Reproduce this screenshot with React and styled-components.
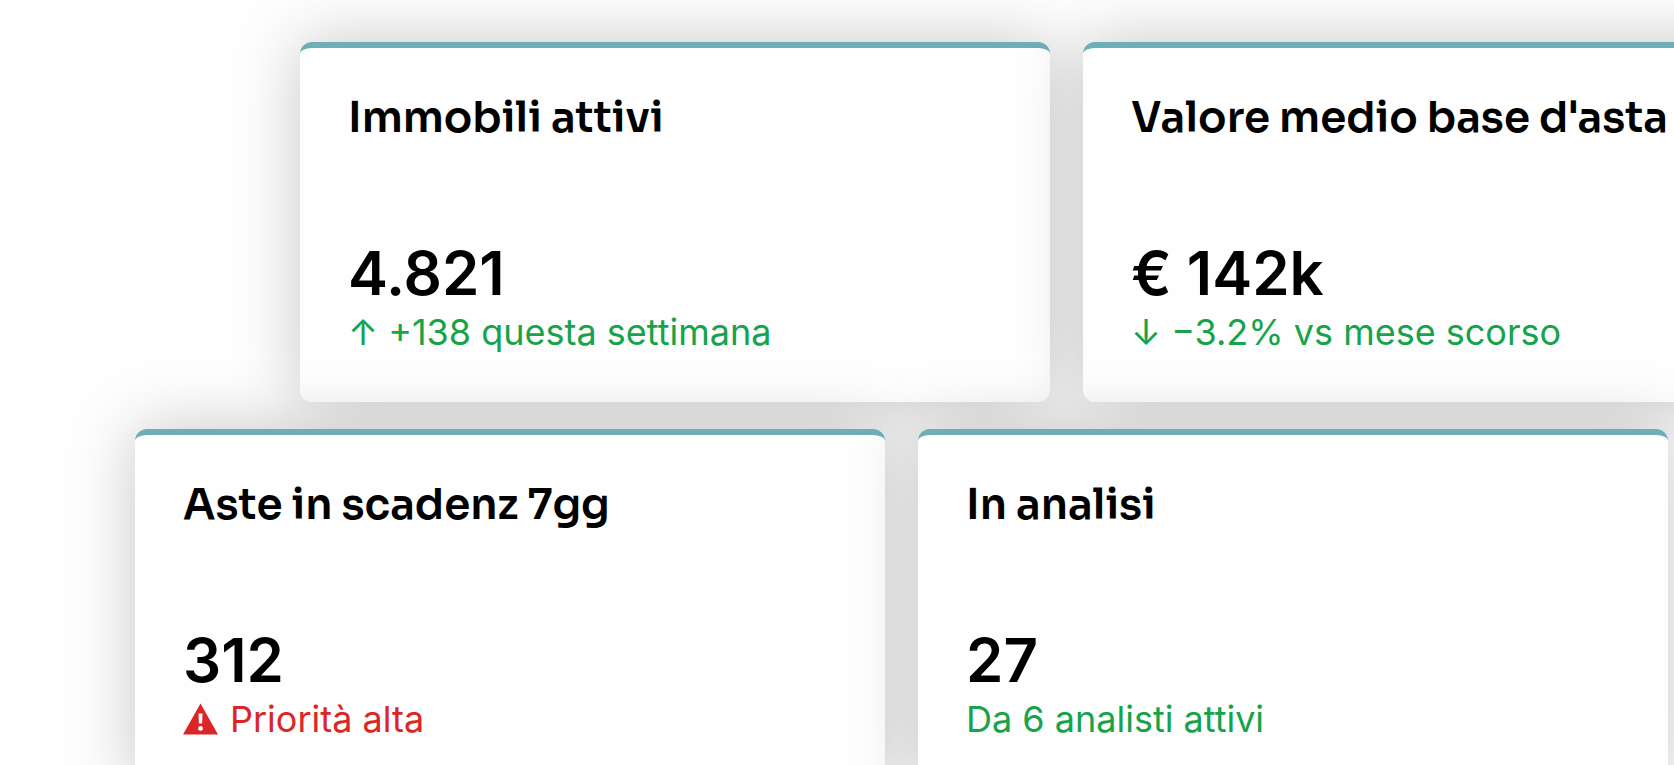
import styled, { createGlobalStyle } from 'styled-components';

const rows = [
    {
        id: 'top',
        shifted: true,
        cards: [
            { title: 'Immobili attivi', value: '4.821', note: '↑ +138 questa settimana' },
            { title: "Valore medio base d'asta", value: '€ 142k', note: '↓ −3.2% vs mese scorso' },
        ],
    },
    {
        id: 'bottom',
        shifted: false,
        cards: [
            { title: 'Aste in scadenz 7gg', value: '312', note: 'Priorità alta', alert: true },
            { title: 'In analisi', value: '27', note: 'Da 6 analisti attivi' },
        ],
    },
];

const WarningIcon = () => (
    <WarningSvg viewBox="0 0 35 32" aria-hidden="true">
        <path
            fill="currentColor"
            fillRule="evenodd"
            d="M17.5 0.5L35 31.5H0ZM15.5 10.5L15.9 20.5H19.1L19.5 10.5ZM17.5 23A2.4 2.4 0 1 0 17.5 27.8A2.4 2.4 0 1 0 17.5 23Z"
        />
    </WarningSvg>
);

const StatCard = ({ title, value, note, alert }) => (
    <Card>
        <Title>{title}</Title>
        <Figures>
            <Value>{value}</Value>
            <Note $alert={alert}>
                {alert && <WarningIcon />}
                {note}
            </Note>
        </Figures>
    </Card>
);

const App = () => {
    return (
        <>
            <GlobalStyle />
            <Board>
                {rows.map((row) => (
                    <Row key={row.id} $shifted={row.shifted}>
                        {row.cards.map((card) => (
                            <StatCard key={card.title} {...card} />
                        ))}
                    </Row>
                ))}
            </Board>
        </>
    );
};

const GlobalStyle = createGlobalStyle`
    * {
        box-sizing: border-box;
    }
    body {
        margin: 0;
        background: #fefefe;
        font-family: Inter, "Liberation Sans", sans-serif;
        overflow: hidden;
    }
`;
const Board = styled.main`
    display: flex;
    flex-direction: column;
    gap: 27px;
    padding: 42px 6px 42px 135px;
`;
// the shifted row runs past the right edge of the board
const Row = styled.section`
    display: grid;
    grid-template-columns: repeat(2, minmax(0, 1fr));
    gap: 33px;
    margin-left: ${(props) => (props.$shifted ? '165px' : '0')};
    margin-right: ${(props) => (props.$shifted ? '-165px' : '0')};
`;
const Card = styled.article`
    display: flex;
    flex-direction: column;
    justify-content: space-between;
    min-height: 360px;
    padding: 45px 48px 48px;
    background: #fefefe;
    border-top: 6px solid #6dafb9;
    border-radius: 12px;
    box-shadow: 0 0 66px rgba(0, 0, 0, 0.22);
`;
const Title = styled.h2`
    margin: 0;
    font-family: Sora, Inter, "Liberation Sans", sans-serif;
    font-size: 42px;
    font-weight: 600;
    line-height: 50px;
    color: #000;
    white-space: nowrap;
`;
const Figures = styled.div`
    display: flex;
    flex-direction: column;
`;
const Value = styled.p`
    margin: 0;
    font-size: 60px;
    font-weight: 600;
    line-height: 74px;
    color: #000;
`;
const Note = styled.p`
    display: flex;
    align-items: center;
    gap: 12px;
    margin: 0;
    font-size: 36px;
    font-weight: 400;
    line-height: 44px;
    color: ${(props) => (props.$alert ? '#dc2626' : '#16a34a')};
`;
const WarningSvg = styled.svg`
    width: 35px;
    height: 32px;
`;

export default App;
